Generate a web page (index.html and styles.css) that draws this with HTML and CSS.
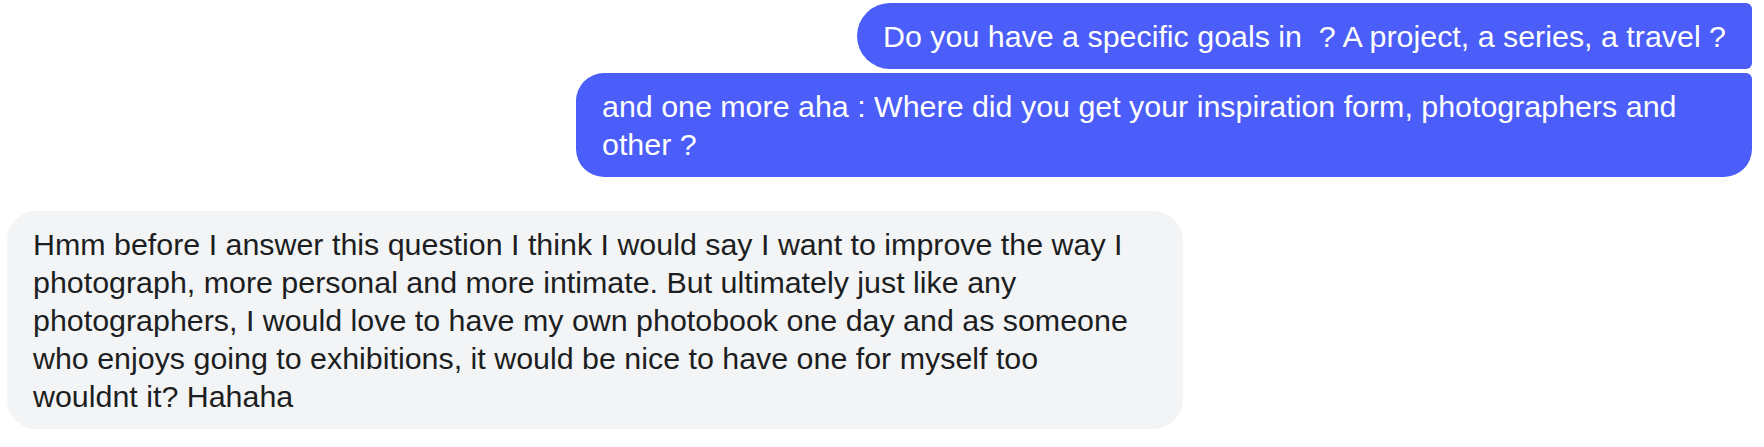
FILE: index.html
```html
<!DOCTYPE html>
<html lang="en">
<head>
<meta charset="utf-8">
<title>Chat</title>
<link rel="stylesheet" href="styles.css">
</head>
<body>
<div class="thread">
  <div class="row row-out">
    <div class="bubble out out-mid">Do you have a specific goals in&nbsp; ? A project, a series, a travel ?</div>
  </div>
  <div class="row row-out">
    <div class="bubble out out-last">and one more aha : Where did you get your inspiration form, photographers and other ?</div>
  </div>
  <div class="row row-in">
    <div class="bubble in">Hmm before I answer this question I think I would say I want to improve the way I photograph, more personal and more intimate. But ultimately just like any photographers, I would love to have my own photobook one day and as someone who enjoys going to exhibitions, it would be nice to have one for myself too wouldnt it? Hahaha</div>
  </div>
</div>
</body>
</html>
```
FILE: styles.css
```css
html, body {
  margin: 0;
  padding: 0;
  background: #ffffff;
}

body {
  font-family: "Liberation Sans", Arial, sans-serif;
  font-size: 30.4px;
  line-height: 38px;
}

.thread {
  display: flex;
  flex-direction: column;
  padding: 3px 12px 0 7px;
}

.row {
  display: flex;
}

.row-out {
  justify-content: flex-end;
  margin-bottom: 4px;
}

.row-in {
  justify-content: flex-start;
  margin-top: 30px;
}

.bubble {
  max-width: 1176px;
  box-sizing: border-box;
  padding: 14px 26px;
}

.out {
  background: #4b5ef9;
  color: #ffffff;
}

.out-mid {
  border-radius: 33px 6px 6px 33px;
}

.out-last {
  border-radius: 28px 6px 28px 28px;
}

.in {
  width: 1176px;
  padding-right: 38px;
  background: #f3f4f6;
  color: #1c1e21;
  border-radius: 30px;
}
```
